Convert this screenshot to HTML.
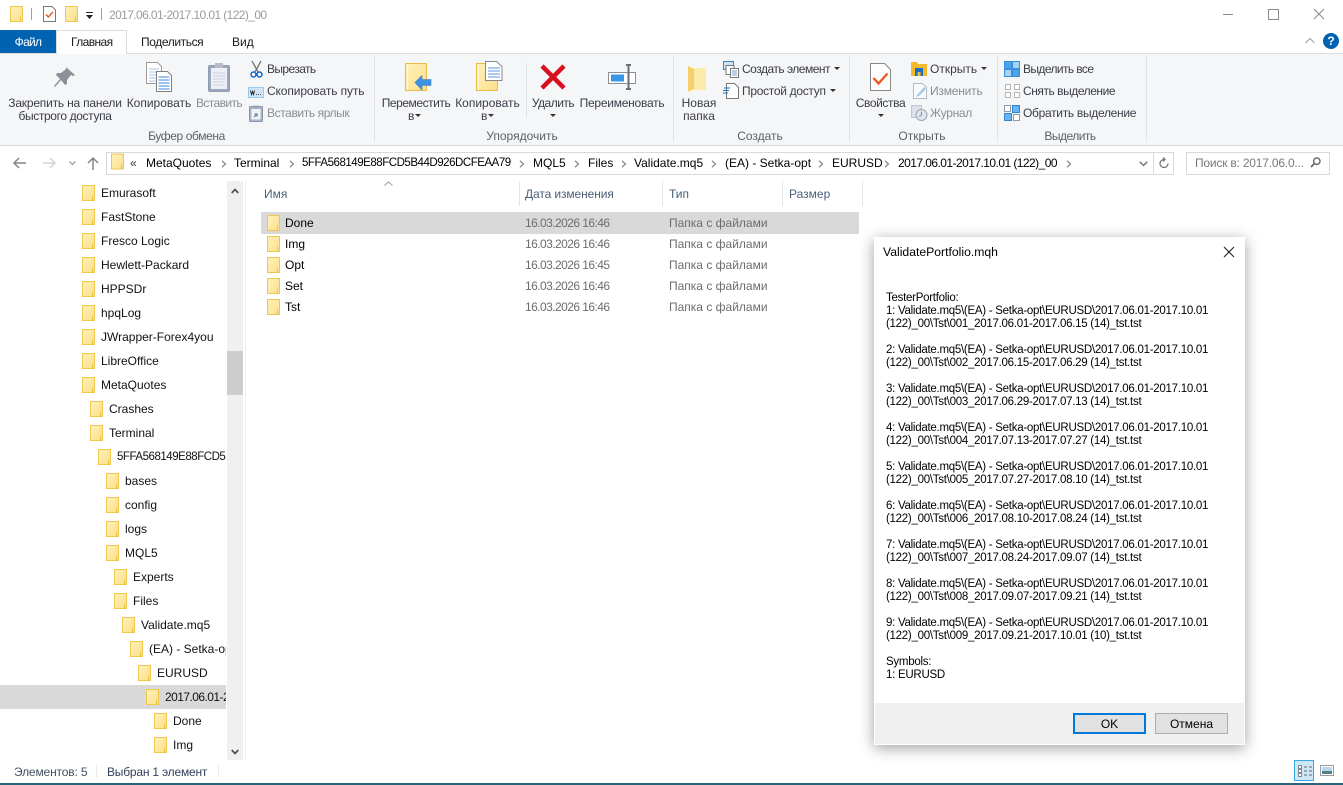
<!DOCTYPE html>
<html lang="ru"><head><meta charset="utf-8"><title>Explorer</title>
<style>
html,body{margin:0;padding:0;width:1343px;height:785px;overflow:hidden;background:#fff}
body{position:relative;font:12px/16px "Liberation Sans",sans-serif;color:#1a1a1a}
.t{position:absolute;white-space:nowrap;height:16px}
.c{text-align:center}
.r{color:#3c3c48}
.g{color:#8a8d92}
.b{position:absolute}
svg{position:absolute;overflow:visible}
.a{color:#000}
.h{color:#4c607a}
.d{color:#6d6d6d}
.dt{letter-spacing:-.56px}
.tr{color:#111}
.dl{position:absolute;left:886px;top:292px;width:350px;line-height:13px;color:#000;white-space:pre;font-size:11.5px;letter-spacing:-.27px}
</style></head><body>
<svg width="0" height="0" style="position:absolute"><defs>
<linearGradient id="fg" x1="0" y1="0" x2="1" y2="1"><stop offset="0" stop-color="#fff1bd"/><stop offset="1" stop-color="#fcdf88"/></linearGradient>
<symbol id="f" viewBox="0 0 13 16"><rect x=".5" y=".5" width="12" height="15" fill="url(#fg)" stroke="#eec74e"/><path d="M10.500 10.500v5" stroke="#eec74e" fill="none"/></symbol>
<symbol id="F" viewBox="0 0 22 28"><rect x=".5" y=".5" width="21" height="27" fill="url(#fg)" stroke="#e9bd45"/><path d="M2.500 1v26" stroke="#fff6d2" fill="none"/></symbol>
<symbol id="chev" viewBox="0 0 6 8"><path d="M1 0.800L4.400 4 1 7.200" fill="none" stroke="#8f8f8f" stroke-width="1.400"/></symbol>
</defs></svg>

<!-- title bar -->
<svg style="left:10px;top:6px" width="13" height="16"><use href="#f"/></svg>
<div class="b" style="left:31px;top:8px;width:1px;height:12px;background:#a0a0a0"></div>
<svg style="left:43px;top:6px" width="13" height="16" viewBox="0 0 13 16"><path d="M.5.500h8.500l3.500 3.500v11.500h-12z" fill="#fff" stroke="#777"/><path d="M3 8.500l2.300 2.500 4.700-5" fill="none" stroke="#e2582a" stroke-width="1.400"/></svg>
<svg style="left:65px;top:6px" width="13" height="16"><use href="#f"/></svg>
<svg style="left:85px;top:12px" width="9" height="8" viewBox="0 0 9 8"><path d="M1 .5h7" stroke="#222"/><path d="M1 3h7L4.500 7z" fill="#222"/></svg>
<div class="b" style="left:101px;top:8px;width:1px;height:12px;background:#a0a0a0"></div>
<div class="t" style="left:109px;top:7px;color:#9b9b9b;letter-spacing:-.6px">2017.06.01-2017.10.01 (122)_00</div>
<div class="b" style="left:1223px;top:14px;width:10px;height:1px;background:#8a8a8a"></div>
<div class="b" style="left:1268px;top:9px;width:9px;height:9px;border:1px solid #8a8a8a"></div>
<svg style="left:1314px;top:9px" width="10" height="10" viewBox="0 0 10 10"><path d="M0 0l10 10M10 0L0 10" stroke="#8a8a8a"/></svg>

<!-- tabs -->
<div class="b" style="left:0;top:30px;width:56px;height:23px;background:#0063b1"></div>
<div class="t c" style="left:0;top:34px;width:56px;color:#fff;letter-spacing:-.7px">Файл</div>
<div class="b" style="left:0;top:53px;width:1343px;height:1px;background:#dadbdc"></div>
<div class="b" style="left:56px;top:30px;width:69px;height:24px;background:#fff;border:1px solid #dadbdc;border-bottom:0;box-sizing:content-box"></div>
<div class="t" style="left:71px;top:34px;letter-spacing:-.6px">Главная</div>
<div class="t" style="left:141px;top:34px;letter-spacing:-.4px">Поделиться</div>
<div class="t" style="left:232px;top:34px">Вид</div>
<svg style="left:1305px;top:37px" width="10" height="7" viewBox="0 0 10 7"><path d="M.5 6L5 1.500 9.500 6" fill="none" stroke="#a8a8a8" stroke-width="1.200"/></svg>
<div class="b" style="left:1323px;top:33px;width:16px;height:16px;border-radius:50%;background:#0063b1;color:#fff;font:bold 12px/16px 'Liberation Sans',sans-serif;text-align:center">?</div>

<!-- ribbon -->
<div class="b" style="left:0;top:54px;width:1343px;height:91px;background:#f5f6f7"></div>
<div class="b" style="left:0;top:145px;width:1343px;height:1px;background:#dadbdc"></div>
<div class="b" style="left:374px;top:56px;width:1px;height:86px;background:#e2e3e4"></div>
<div class="b" style="left:526px;top:63px;width:1px;height:55px;background:#e2e3e4"></div>
<div class="b" style="left:673px;top:56px;width:1px;height:86px;background:#e2e3e4"></div>
<div class="b" style="left:849px;top:56px;width:1px;height:86px;background:#e2e3e4"></div>
<div class="b" style="left:997px;top:56px;width:1px;height:86px;background:#e2e3e4"></div>
<div class="b" style="left:1146px;top:56px;width:1px;height:86px;background:#e2e3e4"></div>

<!-- pin -->
<svg style="left:54px;top:67px" width="22" height="22" viewBox="0 0 22 22"><path d="M13 1l8 7-2 1-2-1-4 5 0 4-2 1-4-5-6 7-1-1 6-7-4-4 1-2 4 0 5-4 0-2z" fill="#8c9198"/></svg>
<div class="t c r" style="left:0;top:95px;width:130px;letter-spacing:-.2px">Закрепить на панели</div>
<div class="t c r" style="left:0;top:108px;width:130px;letter-spacing:-.37px">быстрого доступа</div>
<!-- copy -->
<svg style="left:146px;top:62px" width="26" height="30" viewBox="0 0 26 30"><path d="M.5.500h11l4 4v17H.5z" fill="#fff" stroke="#9a9a9a"/><path d="M3 7h10M3 10h10M3 13h10M3 16h10M3 19h10" stroke="#a9c6ec"/><path d="M10.500 9.500h11l4 4v16h-15z" fill="#fff" stroke="#808080"/><path d="M12.500 15h11M12.500 18h11M12.500 21h11M12.500 24h11M12.500 27h11" stroke="#3f87e0"/></svg>
<div class="t c r" style="left:125px;top:95px;width:68px">Копировать</div>
<!-- paste -->
<svg style="left:208px;top:62px" width="22" height="30" viewBox="0 0 22 30"><rect x=".5" y="3.500" width="21" height="26" rx="1.500" fill="#9aa7bd" stroke="#8f9cb2"/><rect x="3" y="6" width="16" height="21" fill="#eef0f6"/><path d="M5 11h12M5 14h12M5 17h12M5 20h12M5 23h12" stroke="#c9cfe0"/><rect x="7" y="1" width="8" height="5" fill="#b6bcc8"/></svg>
<div class="t c g" style="left:190px;top:95px;width:58px;letter-spacing:-.6px">Вставить</div>
<!-- small clipboard items -->
<svg style="left:250px;top:61px" width="13" height="17" viewBox="0 0 13 17"><path d="M2 0l6 11M11 0L5 11" stroke="#6f6f6f" stroke-width="1.300" fill="none"/><circle cx="3.500" cy="13.500" r="2.500" fill="none" stroke="#1467c4" stroke-width="1.500"/><circle cx="9.500" cy="13.500" r="2.500" fill="none" stroke="#1467c4" stroke-width="1.500"/></svg>
<div class="t r" style="left:267px;top:61px;letter-spacing:-.6px">Вырезать</div>
<svg style="left:248px;top:87px" width="16" height="11" viewBox="0 0 16 11"><rect x=".5" y=".5" width="15" height="10" fill="#cfe6f8" stroke="#9cc8ea"/><path d="M2.500 3.500l1 4 1-3 1 3 1-4M8 7.500h.8M10 7.500h.8M12 7.500h.8" stroke="#333" fill="none"/></svg>
<div class="t r" style="left:267px;top:83px;letter-spacing:-.12px">Скопировать путь</div>
<svg style="left:249px;top:105px" width="14" height="17" viewBox="0 0 14 17"><rect x=".5" y="1.500" width="13" height="15" rx="1" fill="#a9b4c6" stroke="#8996aa"/><rect x="2.500" y="4" width="9" height="10.500" fill="#f2f4f8"/><rect x="4.500" y=".5" width="5" height="3" fill="#9aa4b5"/><path d="M5 12l3-3m-2.500 0H8v2.500" stroke="#70819c" stroke-width="1.300" fill="none"/></svg>
<div class="t g" style="left:267px;top:105px;letter-spacing:-.4px">Вставить ярлык</div>
<div class="t c" style="left:125px;top:128px;width:123px;color:#5c5f66;letter-spacing:-.4px">Буфер обмена</div>

<!-- organise -->
<svg style="left:405px;top:63px" width="27" height="28" viewBox="0 0 27 28"><use href="#F" width="22" height="28"/><path d="M10 19.500L17 12.500v4h9v6h-9v4.500z" fill="#3f92e2" stroke="#2f7fd0" stroke-width=".6"/></svg>
<div class="t c r" style="left:378px;top:95px;width:76px;letter-spacing:-.45px">Переместить</div>
<div class="t r" style="left:408px;top:108px">в</div>
<svg style="left:415px;top:114px" width="6" height="3"><path d="M0 0h6L3 3z" fill="#333"/></svg>
<svg style="left:476px;top:61px" width="27" height="30" viewBox="0 0 27 30"><use href="#F" y="2" width="22" height="28"/><path d="M9.500.5h11l5.500 5v14H9.500z" fill="#fff" stroke="#8a8a8a"/><path d="M12 7h12M12 10h12M12 13h12M12 16h12" stroke="#5b97e0"/></svg>
<div class="t c r" style="left:450px;top:95px;width:75px">Копировать</div>
<div class="t r" style="left:481px;top:108px">в</div>
<svg style="left:488px;top:114px" width="6" height="3"><path d="M0 0h6L3 3z" fill="#333"/></svg>
<svg style="left:540px;top:64px" width="26" height="26" viewBox="0 0 26 26"><path d="M2 2l22 22M24 2L2 24" stroke="#d80f1f" stroke-width="4.500"/></svg>
<div class="t c r" style="left:526px;top:95px;width:54px;letter-spacing:-.5px">Удалить</div>
<svg style="left:550px;top:114px" width="6" height="3"><path d="M0 0h6L3 3z" fill="#333"/></svg>
<svg style="left:608px;top:64px" width="28" height="26" viewBox="0 0 28 26"><rect x=".5" y="8.500" width="27" height="11" fill="#fff" stroke="#8a8f96"/><rect x="3" y="10.500" width="13" height="7" fill="#3a97e8"/><path d="M18 1h5M18 25h5M20.500 1v24" stroke="#6a6f76" stroke-width="2" fill="none"/></svg>
<div class="t c r" style="left:578px;top:95px;width:88px;letter-spacing:-.25px">Переименовать</div>
<div class="t c" style="left:462px;top:128px;width:120px;color:#5c5f66">Упорядочить</div>

<!-- create -->
<svg style="left:688px;top:65px" width="20" height="27" viewBox="0 0 20 27"><path d="M6 3h12v22H6z" fill="#fde9a8"/><path d="M0 1l6 3v20l-6 3z" fill="#f5cf6a"/></svg>
<div class="t c r" style="left:676px;top:95px;width:46px">Новая</div>
<div class="t c r" style="left:676px;top:108px;width:46px">папка</div>
<svg style="left:723px;top:61px" width="16" height="17" viewBox="0 0 16 17"><rect x=".5" y=".5" width="10" height="8" fill="#cfe3f5" stroke="#3e84bf"/><rect x="3" y="4.500" width="8" height="9" fill="#fff" stroke="#777"/><rect x="7.500" y="7.500" width="8" height="9" fill="#fff" stroke="#777"/><path d="M9 10h5M9 12h5M9 14h5" stroke="#7a9cc5"/></svg>
<div class="t r" style="left:742px;top:61px;letter-spacing:-.5px">Создать элемент</div>
<svg style="left:834px;top:67px" width="6" height="3"><path d="M0 0h6L3 3z" fill="#333"/></svg>
<svg style="left:723px;top:83px" width="16" height="16" viewBox="0 0 16 16"><path d="M3.500.5h8l4 4v11h-12z" fill="#fff" stroke="#777"/><path d="M1 5h6M0 7.500h6M0 10h5" stroke="#1e6fbd"/></svg>
<div class="t r" style="left:742px;top:83px;letter-spacing:-.3px">Простой доступ</div>
<svg style="left:830px;top:89px" width="6" height="3"><path d="M0 0h6L3 3z" fill="#333"/></svg>
<div class="t c" style="left:720px;top:128px;width:80px;color:#5c5f66">Создать</div>

<!-- open -->
<svg style="left:870px;top:63px" width="21" height="28" viewBox="0 0 21 28"><path d="M.5.500h14l6 6v21H.5z" fill="#fdfdfd" stroke="#888"/><path d="M3.500 15l5 5.500 9-10" fill="none" stroke="#ea5a1f" stroke-width="2.400"/></svg>
<div class="t c r" style="left:850px;top:95px;width:61px;letter-spacing:-.4px">Свойства</div>
<svg style="left:878px;top:114px" width="6" height="3"><path d="M0 0h6L3 3z" fill="#333"/></svg>
<svg style="left:911px;top:62px" width="16" height="14" viewBox="0 0 16 14"><path d="M0 0h6l1 2h9v12H0z" fill="#f4b92c"/><rect x="4" y="6" width="8" height="4" fill="#1f6fbe"/><path d="M4 10h2.500v4H4zM9.500 10H12v4H9.500z" fill="#1f6fbe"/></svg>
<div class="t r" style="left:930px;top:61px">Открыть</div>
<svg style="left:981px;top:67px" width="6" height="3"><path d="M0 0h6L3 3z" fill="#333"/></svg>
<svg style="left:913px;top:83px" width="14" height="16" viewBox="0 0 14 16"><path d="M.5.500h9l4 4v11H.5z" fill="#fafbfd" stroke="#b4bcc8"/><path d="M4 12L11 4l2 2-7 7-3 1z" fill="#a8c8e4"/></svg>
<div class="t g" style="left:930px;top:83px;letter-spacing:-.2px">Изменить</div>
<svg style="left:911px;top:105px" width="17" height="16" viewBox="0 0 17 16"><rect x=".5" y=".5" width="10" height="12" fill="#dde2ea" stroke="#c0c6d0"/><circle cx="10.500" cy="10" r="5.500" fill="#e2e6ec" stroke="#9aa3b0"/><path d="M10.500 6.500V10l-2.500 1.500" stroke="#7e8896" fill="none"/></svg>
<div class="t g" style="left:930px;top:105px;letter-spacing:-.3px">Журнал</div>
<div class="t c" style="left:882px;top:128px;width:80px;color:#5c5f66">Открыть</div>

<!-- select -->
<svg style="left:1004px;top:61px" width="16" height="16" viewBox="0 0 16 16"><rect width="16" height="16" fill="#3a8fdc"/><rect x="1" y="1" width="6" height="6" fill="#4ba3ec"/><rect x="9" y="1" width="6" height="6" fill="#a5d2f5"/><rect x="1" y="9" width="6" height="6" fill="#a5d2f5"/><rect x="9" y="9" width="6" height="6" fill="#4ba3ec"/></svg>
<div class="t r" style="left:1023px;top:61px;letter-spacing:-.6px">Выделить все</div>
<svg style="left:1005px;top:84px" width="15" height="14" viewBox="0 0 15 14"><path d="M.5.500h5v5h-5zM9.500.500h5v5h-5zM.5 8.500h5v5h-5zM9.500 8.500h5v5h-5z" fill="#fff" stroke="#b5b5b5"/></svg>
<div class="t r" style="left:1023px;top:83px;letter-spacing:-.45px">Снять выделение</div>
<svg style="left:1004px;top:105px" width="16" height="16" viewBox="0 0 16 16"><path d="M.5.500h6v6h-6zM9.500 9.500h6v6h-6z" fill="#fff" stroke="#909aa8"/><rect x="8.500" y=".5" width="7" height="7" fill="#6ab4f0" stroke="#2c85d5"/><rect x=".5" y="8.500" width="7" height="7" fill="#6ab4f0" stroke="#2c85d5"/></svg>
<div class="t r" style="left:1023px;top:105px;letter-spacing:-.3px">Обратить выделение</div>
<div class="t c" style="left:1030px;top:128px;width:80px;color:#5c5f66;letter-spacing:-.5px">Выделить</div>

<!-- nav -->
<svg style="left:13px;top:157px" width="13" height="12" viewBox="0 0 13 12"><path d="M6 1L1 6l5 5M1 6h12" fill="none" stroke="#858585" stroke-width="1.500"/></svg>
<svg style="left:43px;top:157px" width="13" height="12" viewBox="0 0 13 12"><path d="M7 1l5 5-5 5M12 6H0" fill="none" stroke="#d4d4d4" stroke-width="1.500"/></svg>
<svg style="left:69px;top:161px" width="7" height="5" viewBox="0 0 7 5"><path d="M.5.500L3.500 3.500 6.500.5" fill="none" stroke="#a0a0a0" stroke-width="1.300"/></svg>
<svg style="left:87px;top:157px" width="12" height="13" viewBox="0 0 12 13"><path d="M1 6l5-5 5 5M6 1v12" fill="none" stroke="#858585" stroke-width="1.500"/></svg>
<div class="b" style="left:106px;top:152px;width:1066px;height:21px;border:1px solid #d9d9d9"></div>
<div class="b" style="left:1153px;top:153px;width:1px;height:21px;background:#d9d9d9"></div>
<svg style="left:111px;top:153px" width="13" height="17"><use href="#f" width="13" height="17"/></svg>
<div class="t" style="left:130px;top:155px;color:#333">«</div>
<div class="t a" style="left:146px;top:155px">MetaQuotes</div>
<svg style="left:221px;top:160px" width="6" height="8"><use href="#chev"/></svg>
<div class="t a" style="left:234px;top:155px">Terminal</div>
<svg style="left:289px;top:160px" width="6" height="8"><use href="#chev"/></svg>
<div class="t a" style="left:302px;top:155px;font-size:11.5px;letter-spacing:-.47px">5FFA568149E88FCD5B44D926DCFEAA79</div>
<svg style="left:519px;top:160px" width="6" height="8"><use href="#chev"/></svg>
<div class="t a" style="left:533px;top:155px">MQL5</div>
<svg style="left:574px;top:160px" width="6" height="8"><use href="#chev"/></svg>
<div class="t a" style="left:588px;top:155px">Files</div>
<svg style="left:621px;top:160px" width="6" height="8"><use href="#chev"/></svg>
<div class="t a" style="left:634px;top:155px">Validate.mq5</div>
<svg style="left:711px;top:160px" width="6" height="8"><use href="#chev"/></svg>
<div class="t a" style="left:725px;top:155px">(EA) - Setka-opt</div>
<svg style="left:818px;top:160px" width="6" height="8"><use href="#chev"/></svg>
<div class="t a" style="left:832px;top:155px">EURUSD</div>
<svg style="left:884px;top:160px" width="6" height="8"><use href="#chev"/></svg>
<div class="t a" style="left:898px;top:155px;letter-spacing:-.55px">2017.06.01-2017.10.01 (122)_00</div>
<svg style="left:1066px;top:160px" width="6" height="8"><use href="#chev"/></svg>
<svg style="left:1139px;top:161px" width="9" height="6" viewBox="0 0 9 6"><path d="M.8.800L4.500 4.500 8.200.8" fill="none" stroke="#777" stroke-width="1.500"/></svg>
<svg style="left:1159px;top:157px" width="10" height="12" viewBox="0 0 10 12"><path d="M5 2.500A4 4 0 1 0 9 6.500M4 .5l2 2-2 2" fill="none" stroke="#777" stroke-width="1.300"/></svg>
<div class="b" style="left:1186px;top:152px;width:142px;height:21px;border:1px solid #d9d9d9"></div>
<div class="t" style="left:1195px;top:155px;color:#7a7a7a;letter-spacing:-.2px">Поиск в: 2017.06.0...</div>
<svg style="left:1310px;top:157px" width="11" height="11" viewBox="0 0 11 11"><circle cx="6.800" cy="4.200" r="3.200" fill="none" stroke="#666" stroke-width="1.400"/><path d="M4.500 6.500L1 10" stroke="#666" stroke-width="1.800"/></svg>

<!-- tree -->
<div class="b" style="left:0;top:685px;width:226px;height:24px;background:#d9d9d9"></div>
<div class="b" style="left:0;top:181px;width:226px;height:579px;overflow:hidden">
<svg style="left:82px;top:4px" width="13" height="16"><use href="#f"/></svg><div class="t tr" style="left:101px;top:4px">Emurasoft</div>
<svg style="left:82px;top:28px" width="13" height="16"><use href="#f"/></svg><div class="t tr" style="left:101px;top:28px">FastStone</div>
<svg style="left:82px;top:52px" width="13" height="16"><use href="#f"/></svg><div class="t tr" style="left:101px;top:52px">Fresco Logic</div>
<svg style="left:82px;top:76px" width="13" height="16"><use href="#f"/></svg><div class="t tr" style="left:101px;top:76px">Hewlett-Packard</div>
<svg style="left:82px;top:100px" width="13" height="16"><use href="#f"/></svg><div class="t tr" style="left:101px;top:100px">HPPSDr</div>
<svg style="left:82px;top:124px" width="13" height="16"><use href="#f"/></svg><div class="t tr" style="left:101px;top:124px">hpqLog</div>
<svg style="left:82px;top:148px" width="13" height="16"><use href="#f"/></svg><div class="t tr" style="left:101px;top:148px">JWrapper-Forex4you</div>
<svg style="left:82px;top:172px" width="13" height="16"><use href="#f"/></svg><div class="t tr" style="left:101px;top:172px">LibreOffice</div>
<svg style="left:82px;top:196px" width="13" height="16"><use href="#f"/></svg><div class="t tr" style="left:101px;top:196px">MetaQuotes</div>
<svg style="left:90px;top:220px" width="13" height="16"><use href="#f"/></svg><div class="t tr" style="left:109px;top:220px">Crashes</div>
<svg style="left:90px;top:244px" width="13" height="16"><use href="#f"/></svg><div class="t tr" style="left:109px;top:244px">Terminal</div>
<svg style="left:98px;top:268px" width="13" height="16"><use href="#f"/></svg><div class="t tr" style="left:117px;top:268px;font-size:11.5px;letter-spacing:-.47px">5FFA568149E88FCD5B44D926DCFEAA79</div>
<svg style="left:106px;top:292px" width="13" height="16"><use href="#f"/></svg><div class="t tr" style="left:125px;top:292px">bases</div>
<svg style="left:106px;top:316px" width="13" height="16"><use href="#f"/></svg><div class="t tr" style="left:125px;top:316px">config</div>
<svg style="left:106px;top:340px" width="13" height="16"><use href="#f"/></svg><div class="t tr" style="left:125px;top:340px">logs</div>
<svg style="left:106px;top:364px" width="13" height="16"><use href="#f"/></svg><div class="t tr" style="left:125px;top:364px">MQL5</div>
<svg style="left:114px;top:388px" width="13" height="16"><use href="#f"/></svg><div class="t tr" style="left:133px;top:388px">Experts</div>
<svg style="left:114px;top:412px" width="13" height="16"><use href="#f"/></svg><div class="t tr" style="left:133px;top:412px">Files</div>
<svg style="left:122px;top:436px" width="13" height="16"><use href="#f"/></svg><div class="t tr" style="left:141px;top:436px">Validate.mq5</div>
<svg style="left:130px;top:460px" width="13" height="16"><use href="#f"/></svg><div class="t tr" style="left:149px;top:460px">(EA) - Setka-opt</div>
<svg style="left:138px;top:484px" width="13" height="16"><use href="#f"/></svg><div class="t tr" style="left:157px;top:484px">EURUSD</div>
<svg style="left:146px;top:508px" width="13" height="16"><use href="#f"/></svg><div class="t tr" style="left:165px;top:508px;letter-spacing:-.55px">2017.06.01-2017.10.01</div>
<svg style="left:154px;top:532px" width="13" height="16"><use href="#f"/></svg><div class="t tr" style="left:173px;top:532px">Done</div>
<svg style="left:154px;top:556px" width="13" height="16"><use href="#f"/></svg><div class="t tr" style="left:173px;top:556px">Img</div>
</div>
<!-- tree scrollbar -->
<div class="b" style="left:227px;top:181px;width:16px;height:579px;background:#f0f0f0"></div>
<div class="b" style="left:227px;top:351px;width:16px;height:44px;background:#cdcdcd"></div>
<svg style="left:231px;top:188px" width="8" height="6" viewBox="0 0 8 6"><path d="M.7 5L4 1.500 7.300 5" fill="none" stroke="#505050" stroke-width="1.700"/></svg>
<svg style="left:231px;top:749px" width="8" height="6" viewBox="0 0 8 6"><path d="M.7 1L4 4.500 7.300 1" fill="none" stroke="#505050" stroke-width="1.700"/></svg>
<div class="b" style="left:245px;top:181px;width:1px;height:579px;background:#f0f0f0"></div>

<!-- list header -->
<svg style="left:384px;top:181px" width="9" height="5" viewBox="0 0 9 5"><path d="M.5 4.500L4.500 1l4 3.500" fill="none" stroke="#9a9a9a"/></svg>
<div class="t h" style="left:264px;top:186px">Имя</div>
<div class="b" style="left:519px;top:181px;width:1px;height:25px;background:#e5e5e5"></div>
<div class="t h" style="left:525px;top:186px;letter-spacing:-.1px">Дата изменения</div>
<div class="b" style="left:662px;top:181px;width:1px;height:25px;background:#e5e5e5"></div>
<div class="t h" style="left:669px;top:186px">Тип</div>
<div class="b" style="left:782px;top:181px;width:1px;height:25px;background:#e5e5e5"></div>
<div class="t h" style="left:789px;top:186px">Размер</div>
<div class="b" style="left:862px;top:181px;width:1px;height:25px;background:#e5e5e5"></div>

<!-- list rows -->
<div class="b" style="left:261px;top:212px;width:598px;height:22px;background:#d9d9d9"></div>
<svg style="left:267px;top:215px" width="13" height="16"><use href="#f"/></svg><div class="t a" style="left:285px;top:215px">Done</div><div class="t d dt" style="left:525px;top:215px">16.03.2026 16:46</div><div class="t d" style="left:669px;top:215px">Папка с файлами</div>
<svg style="left:267px;top:236px" width="13" height="16"><use href="#f"/></svg><div class="t a" style="left:285px;top:236px">Img</div><div class="t d dt" style="left:525px;top:236px">16.03.2026 16:46</div><div class="t d" style="left:669px;top:236px">Папка с файлами</div>
<svg style="left:267px;top:257px" width="13" height="16"><use href="#f"/></svg><div class="t a" style="left:285px;top:257px">Opt</div><div class="t d dt" style="left:525px;top:257px">16.03.2026 16:45</div><div class="t d" style="left:669px;top:257px">Папка с файлами</div>
<svg style="left:267px;top:278px" width="13" height="16"><use href="#f"/></svg><div class="t a" style="left:285px;top:278px">Set</div><div class="t d dt" style="left:525px;top:278px">16.03.2026 16:46</div><div class="t d" style="left:669px;top:278px">Папка с файлами</div>
<svg style="left:267px;top:299px" width="13" height="16"><use href="#f"/></svg><div class="t a" style="left:285px;top:299px">Tst</div><div class="t d dt" style="left:525px;top:299px">16.03.2026 16:46</div><div class="t d" style="left:669px;top:299px">Папка с файлами</div>

<!-- status bar -->
<div class="t" style="left:14px;top:764px;color:#44505f;letter-spacing:-.15px">Элементов: 5</div>
<div class="b" style="left:96px;top:765px;width:1px;height:13px;background:#ececec"></div>
<div class="t" style="left:107px;top:764px;color:#33415c;letter-spacing:-.2px">Выбран 1 элемент</div>
<div class="b" style="left:218px;top:765px;width:1px;height:13px;background:#ececec"></div>
<div class="b" style="left:1294px;top:760px;width:20px;height:21px;background:#cce8f8;border:1px solid #3aa8e0;box-sizing:border-box"></div>
<svg style="left:1298px;top:765px" width="15" height="13" viewBox="0 0 15 13"><path d="M.5.500h3v3h-3zM.5 4.500h3v3h-3zM.5 8.500h3v3h-3z" fill="#fff" stroke="#888"/><path d="M6 2h3M11 2h3M6 6h3M11 6h3M6 10h3M11 10h3" stroke="#666"/></svg>
<svg style="left:1320px;top:765px" width="14" height="11" viewBox="0 0 14 11"><rect x=".5" y=".5" width="13" height="10" fill="#fff" stroke="#999"/><rect x="2" y="2" width="10" height="4" fill="#b8d6ea"/><rect x="2" y="6" width="10" height="3" fill="#4f7f8a"/></svg>
<div class="b" style="left:0;top:783px;width:1343px;height:2px;background:#2a6478"></div>

<!-- dialog -->
<div class="b" style="left:874px;top:237px;width:371px;height:508px;background:#fff;box-shadow:0 3px 14px rgba(0,0,0,.38)"></div>
<div class="t a" style="left:883px;top:244px;font-size:12.2px">ValidatePortfolio.mqh</div>
<svg style="left:1224px;top:247px" width="10" height="10" viewBox="0 0 10 10"><path d="M0 0l10 10M10 0L0 10" stroke="#222" stroke-width="1.100"/></svg>
<div class="dl">TesterPortfolio:
1: Validate.mq5\(EA) - Setka-opt\EURUSD\2017.06.01-2017.10.01
(122)_00\Tst\001_2017.06.01-2017.06.15 (14)_tst.tst

2: Validate.mq5\(EA) - Setka-opt\EURUSD\2017.06.01-2017.10.01
(122)_00\Tst\002_2017.06.15-2017.06.29 (14)_tst.tst

3: Validate.mq5\(EA) - Setka-opt\EURUSD\2017.06.01-2017.10.01
(122)_00\Tst\003_2017.06.29-2017.07.13 (14)_tst.tst

4: Validate.mq5\(EA) - Setka-opt\EURUSD\2017.06.01-2017.10.01
(122)_00\Tst\004_2017.07.13-2017.07.27 (14)_tst.tst

5: Validate.mq5\(EA) - Setka-opt\EURUSD\2017.06.01-2017.10.01
(122)_00\Tst\005_2017.07.27-2017.08.10 (14)_tst.tst

6: Validate.mq5\(EA) - Setka-opt\EURUSD\2017.06.01-2017.10.01
(122)_00\Tst\006_2017.08.10-2017.08.24 (14)_tst.tst

7: Validate.mq5\(EA) - Setka-opt\EURUSD\2017.06.01-2017.10.01
(122)_00\Tst\007_2017.08.24-2017.09.07 (14)_tst.tst

8: Validate.mq5\(EA) - Setka-opt\EURUSD\2017.06.01-2017.10.01
(122)_00\Tst\008_2017.09.07-2017.09.21 (14)_tst.tst

9: Validate.mq5\(EA) - Setka-opt\EURUSD\2017.06.01-2017.10.01
(122)_00\Tst\009_2017.09.21-2017.10.01 (10)_tst.tst

Symbols:
1: EURUSD</div>
<div class="b" style="left:875px;top:703px;width:369px;height:41px;background:#f0f0f0"></div>
<div class="b" style="left:1073px;top:713px;width:73px;height:21px;background:#e1e1e1;border:2px solid #0078d7;box-sizing:border-box;text-align:center;line-height:19px;color:#000">OK</div>
<div class="b" style="left:1155px;top:713px;width:73px;height:21px;background:#e1e1e1;border:1px solid #adadad;box-sizing:border-box;text-align:center;line-height:21px;color:#000">Отмена</div>
</body></html>
